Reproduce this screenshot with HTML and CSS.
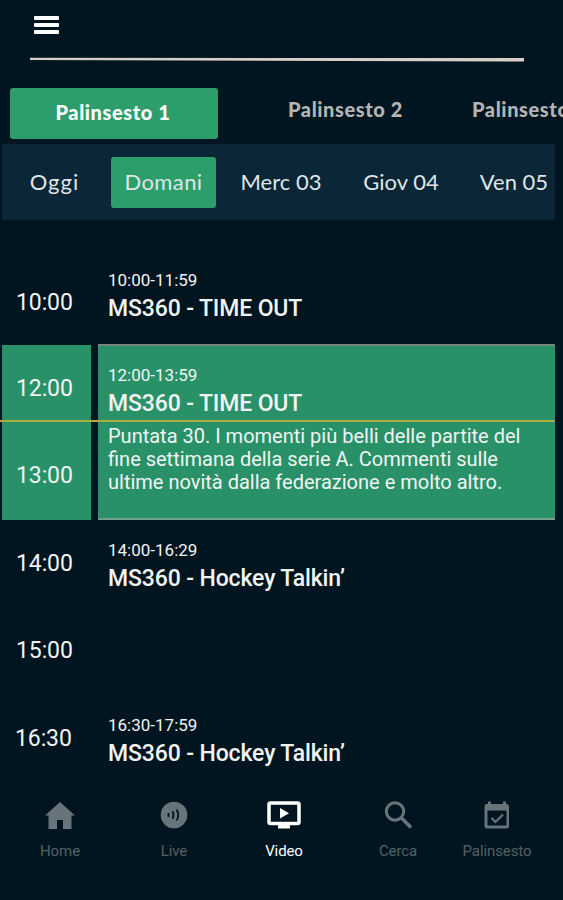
FILE: index.html
```html
<!DOCTYPE html>
<html lang="it">
<head>
    <meta charset="UTF-8">
    <meta name="viewport" content="width=device-width, initial-scale=1.0">
    <title>Palinsesto</title>
    <link rel="stylesheet" href="styles.css">
</head>
<body>

    <header class="top-bar">
        <button class="menu-button" aria-label="Menu">
            <span></span>
            <span></span>
            <span></span>
        </button>
        <svg class="divider" viewBox="0 0 494 5" width="494" height="5">
            <polygon points="0,0.8 494,1 494,4.6 0,3"/>
        </svg>
    </header>

    <div class="channel-tabs">
        <button class="channel active">Palinsesto 1</button>
        <button class="channel second">Palinsesto 2</button>
        <button class="channel third">Palinsesto</button>
    </div>

    <div class="day-tabs">
        <button class="day short">Oggi</button>
        <button class="day active">Domani</button>
        <button class="day">Merc 03</button>
        <button class="day">Giov 04</button>
        <button class="day">Ven 05</button>
    </div>

    <main class="schedule">
        <div class="slot">
            <div class="hours">
                <div class="hour first">10:00</div>
            </div>
            <div class="program first">
                <p class="range">10:00-11:59</p>
                <h2 class="title">MS360 - TIME OUT</h2>
            </div>
        </div>

        <div class="slot current">
            <div class="hours">
                <div class="hour">12:00</div>
                <div class="hour">13:00</div>
            </div>
            <div class="program">
                <p class="range">12:00-13:59</p>
                <h2 class="title">MS360 - TIME OUT</h2>
                <p class="description">Puntata 30. I momenti più belli delle partite del<br>fine settimana della serie A. Commenti sulle<br>ultime novità dalla federazione e molto altro.</p>
            </div>
            <div class="now-line"></div>
        </div>

        <div class="slot">
            <div class="hours">
                <div class="hour">14:00</div>
                <div class="hour">15:00</div>
            </div>
            <div class="program">
                <p class="range">14:00-16:29</p>
                <h2 class="title">MS360 - Hockey Talkin’</h2>
            </div>
        </div>

        <div class="slot">
            <div class="hours">
                <div class="hour half">16:30</div>
            </div>
            <div class="program">
                <p class="range">16:30-17:59</p>
                <h2 class="title">MS360 - Hockey Talkin’</h2>
            </div>
        </div>
    </main>

    <nav class="bottom-nav">
        <a class="nav-item">
            <svg width="36" height="32" viewBox="0 0 36 32">
                <path d="M18 3 3 16.500h3.500V30H15v-9h6v9h8.500V16.500H33z" fill="currentColor"/>
            </svg>
            <span>Home</span>
        </a>
        <a class="nav-item">
            <svg width="36" height="32" viewBox="0 0 36 32">
                <circle cx="18" cy="16" r="13.300" fill="currentColor"/>
                <path d="M12.500 14v4M16.500 12.300q2 3.700 0 7.400M20.500 10.500q3.500 5.500 0 11" class="waves"/>
            </svg>
            <span>Live</span>
        </a>
        <a class="nav-item active">
            <svg width="36" height="32" viewBox="0 0 36 32">
                <rect x="3" y="4" width="30" height="20.500" rx="1.500" fill="none" stroke="currentColor" stroke-width="3.500"/>
                <path d="M12 24h12v5.500H12zM14 9v10.500l9-5.200z" fill="currentColor"/>
            </svg>
            <span>Video</span>
        </a>
        <a class="nav-item">
            <svg width="36" height="32" viewBox="0 0 36 32">
                <circle cx="15" cy="12.500" r="8.700" fill="none" stroke="currentColor" stroke-width="3"/>
                <path d="m21 18.500 10 10" fill="none" stroke="currentColor" stroke-width="3.600"/>
            </svg>
            <span>Cerca</span>
        </a>
        <a class="nav-item">
            <svg width="36" height="32" viewBox="0 0 36 32">
                <path fill-rule="evenodd" d="M9 2.500h3V5h12V2.500h3V5h1q2 0 2 2.500v19.500q0 2.500-2.500 2.500H8q-2.500 0-2.500-2.500V7.500Q5.500 5 8 5h1zM8.500 11.500v15h19v-15z" fill="currentColor"/>
                <path d="m12.500 19 4 4 7.500-7.500" fill="none" stroke="currentColor" stroke-width="2.200"/>
            </svg>
            <span>Palinsesto</span>
        </a>
    </nav>

</body>
</html>
```

FILE: styles.css
```css
* {
    box-sizing: border-box;
}

body {
    margin: 0;
    height: 900px;
    overflow: hidden;
    background: #00151f;
    color: #f2f4f4;
    font-family: Roboto, sans-serif;
}

button {
    padding: 0;
    border: none;
    background: none;
    color: inherit;
    cursor: pointer;
    white-space: nowrap;
}

h2, p {
    margin: 0;
}

.top-bar {
    height: 88px;
    padding: 16px 0 0 30px;
}

.menu-button {
    display: flex;
    flex-direction: column;
    gap: 3px;
    width: 25px;
    margin-left: 4px;
}

.menu-button span {
    width: 100%;
    height: 4px;
    border-radius: 1px;
    background: #fff;
}

.divider {
    display: block;
    margin-top: 23px;
    fill: #d6cdc6;
}

.channel-tabs {
    display: flex;
    height: 56px;
    padding-left: 10px;
}

.channel {
    flex: none;
    height: 44px;
    padding-bottom: 2px;
    font-family: Lato, sans-serif;
    font-size: 20px;
    font-weight: 900;
    letter-spacing: 0.6px;
    color: #b4b4b4;
}

.channel.active {
    width: 208px;
    height: 51px;
    padding: 0 2px 4px 0;
    border-radius: 3px;
    background: #2c9e6c;
    color: #fff;
}

.channel.second {
    width: 117px;
    margin-left: 69px;
}

.channel.third {
    margin-left: 68px;
}

.day-tabs {
    display: grid;
    grid-template-columns: 109px 105px 130px 110px 99px;
    height: 76px;
    width: 553px;
    margin-left: 2px;
    padding-top: 13px;
    background: #0b2636;
}

.day {
    height: 51px;
    padding-bottom: 3px;
    font-family: Lato, sans-serif;
    font-size: 22px;
    color: #dfe5e8;
}

.day.short {
    padding-right: 4px;
    letter-spacing: 1px;
}

.day:last-child {
    padding-left: 17px;
}

.day.active {
    border-radius: 3px;
    background: #2c9e6c;
    letter-spacing: 0.4px;
}

.schedule {
    margin: 37px 8px 0 2px;
}

.slot {
    position: relative;
    display: grid;
    grid-template-columns: 89px 457px;
    column-gap: 7px;
}

.hour {
    height: 87.5px;
    padding-left: 14px;
    font-size: 23px;
    line-height: 87px;
    letter-spacing: -0.1px;
}

.hour.first {
    line-height: 91px;
}

.hour.half {
    padding-left: 13px;
}

.program {
    padding: 20px 0 0 10px;
}

.program.first {
    padding-top: 13px;
}

.range {
    font-size: 17px;
    line-height: 20px;
}

.title {
    margin-top: 4px;
    font-size: 23px;
    font-weight: 500;
    line-height: 30px;
    letter-spacing: -0.13px;
}

.description {
    margin-top: 6px;
    font-size: 20px;
    line-height: 23px;
    white-space: nowrap;
}

.current .hours,
.current .program {
    background: #289168;
}

.current .program {
    padding-top: 19px;
    margin-top: -1px;
    border-top: 2px solid #71877c;
    border-bottom: 2px solid #71a18b;
}

.now-line {
    position: absolute;
    top: 75px;
    left: -2px;
    width: 555px;
    height: 2.5px;
    background: #a9ad42;
}

.bottom-nav {
    display: grid;
    grid-template-columns: 114px 114px 106px 122px 76px;
    margin-top: 17px;
    padding-left: 3px;
}

.nav-item {
    display: flex;
    flex-direction: column;
    align-items: center;
    gap: 11px;
    color: #67757b;
    font-size: 15px;
    line-height: 18px;
}

.nav-item span {
    color: #536168;
    letter-spacing: -0.1px;
}

.nav-item.active,
.nav-item.active span {
    color: #fff;
}

.waves {
    fill: none;
    stroke: #00151f;
    stroke-width: 1.8;
}
```
